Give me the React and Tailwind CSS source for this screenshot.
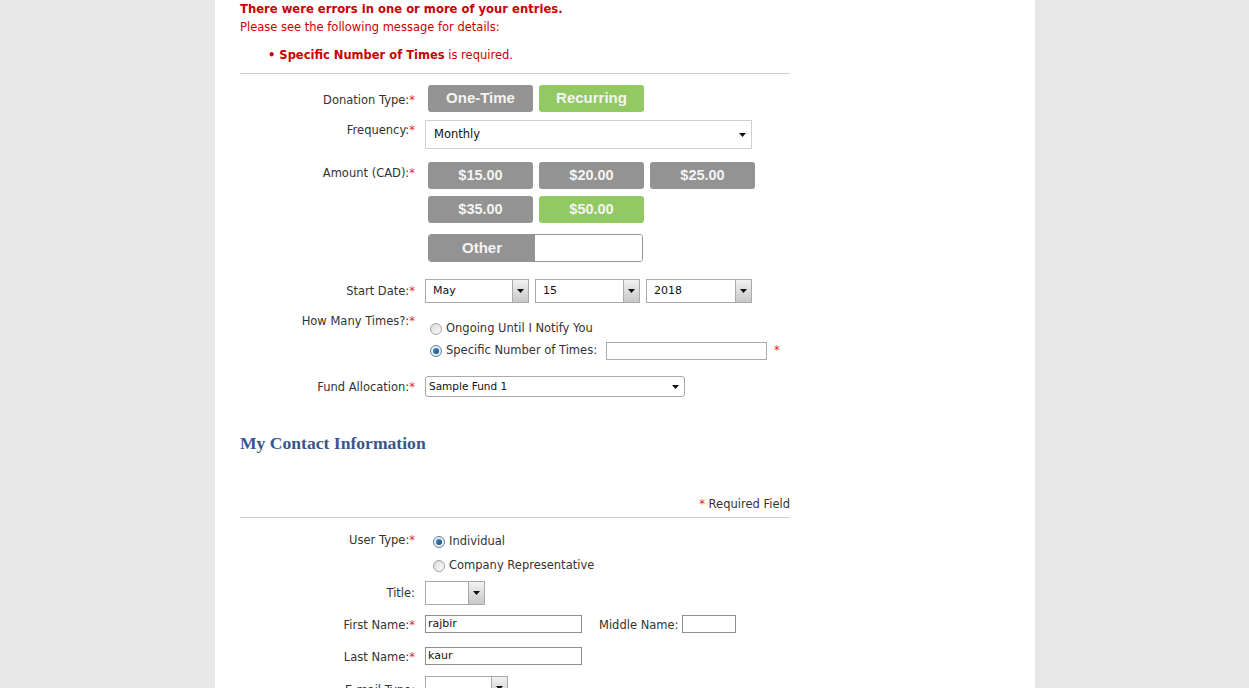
import React from "react";

const Star = () => <span className="text-[#e02b2b]">*</span>;

function Label({ children, req, pt = "pt-0" }) {
  return (
    <div className={`w-[175px] shrink-0 text-right text-[#333] leading-[14px] ${pt}`}>
      {children}
      {req && <Star />}
    </div>
  );
}

function Btn({ children, green, w = "w-[105px]", size = "text-[15px]" }) {
  return (
    <div
      className={`${w} h-[27px] rounded-[3px] flex items-center justify-center font-['Liberation_Sans',Arial,sans-serif] font-bold ${size} text-[#f4f4f4] ${
        green ? "bg-[#92c963]" : "bg-[#939393]"
      }`}
    >
      {children}
    </div>
  );
}

function Arrow() {
  return (
    <svg width="7" height="4" viewBox="0 0 7 4">
      <path d="M0 0h7L3.5 4z" fill="#111" />
    </svg>
  );
}

function BoxSelect({ w, h = "h-[24px]", value }) {
  return (
    <div className={`${w} ${h} border border-[#a9a9a9] bg-white flex items-stretch`}>
      <div className="flex-1 flex items-center pl-[7px] text-[11px] text-[#111]">{value}</div>
      <div className="w-[16px] border-l border-[#a9a9a9] bg-gradient-to-b from-[#f2f2f2] to-[#c8c8c8] flex items-center justify-center">
        <Arrow />
      </div>
    </div>
  );
}

function Radio({ checked }) {
  return checked ? (
    <div className="w-[12px] h-[12px] rounded-full border border-[#5d7f9e] bg-[#e8f0f6] flex items-center justify-center">
      <div className="w-[6px] h-[6px] rounded-full bg-gradient-to-br from-[#4d8fc4] to-[#0c4a7c]" />
    </div>
  ) : (
    <div className="w-[12px] h-[12px] rounded-full border border-[#a3a3a3] bg-gradient-to-br from-[#d8d8d8] to-[#fdfdfd]" />
  );
}

function TextInput({ w, value }) {
  return (
    <div className={`${w} h-[18px] border border-[#8f8f8f] bg-white flex items-center pl-[2px] pt-[1px] text-[11px] text-[#111]`}>
      {value}
    </div>
  );
}

export default function App() {
  return (
    <div className="min-h-[688px] bg-[#e8e8e8] font-['DejaVu_Sans',Verdana,sans-serif] text-[11.5px]">
      <div className="ml-[215px] w-[820px] h-[688px] bg-white pl-[25px] pt-[1px] overflow-hidden">
        <div className="w-[550px]">
          {/* errors */}
          <p className="text-[#cc0000] font-bold text-[11.6px] leading-[16px]">
            There were errors in one or more of your entries.
          </p>
          <p className="text-[#cc0000] leading-[16px] mt-[2px]">Please see the following message for details:</p>
          <p className="mt-[12px] leading-[16px] ml-[28px] text-[#cc0000]">
            <span className="font-bold">• Specific Number of Times</span> is required.
          </p>
          <div className="mt-[10px] border-t border-[#cfcfcf]" />

          {/* Donation type */}
          <div className="flex mt-[11px]">
            <Label req pt="pt-[8px]">Donation Type:</Label>
            <div className="ml-[13px] flex gap-[6px]">
              <Btn>One-Time</Btn>
              <Btn green>Recurring</Btn>
            </div>
          </div>

          {/* Frequency */}
          <div className="flex mt-[8px]">
            <Label req pt="pt-[3px]">Frequency:</Label>
            <div className="ml-[10px] w-[327px] h-[29px] border border-[#d0d0d0] bg-white flex items-center justify-between pl-[8px] pr-[5px] text-[11.5px] text-[#111]">
              <span>Monthly</span>
              <Arrow />
            </div>
          </div>

          {/* Amount */}
          <div className="flex mt-[13px]">
            <Label req pt="pt-[4px]">Amount (CAD):</Label>
            <div className="ml-[13px] flex flex-col">
              <div className="flex gap-[6px]">
                <Btn size="text-[14.5px]">$15.00</Btn>
                <Btn size="text-[14.5px]">$20.00</Btn>
                <Btn size="text-[14.5px]">$25.00</Btn>
              </div>
              <div className="flex gap-[6px] mt-[7px]">
                <Btn size="text-[14.5px]">$35.00</Btn>
                <Btn green size="text-[14.5px]">$50.00</Btn>
              </div>
              <div className="flex mt-[11px] w-[215px] h-[28px] rounded-[3px] border border-[#939393] overflow-hidden">
                <div className="w-[106px] bg-[#939393] flex items-center justify-center font-['Liberation_Sans',Arial,sans-serif] font-bold text-[15px] text-[#f4f4f4]">
                  Other
                </div>
                <div className="flex-1 bg-white" />
              </div>
            </div>
          </div>

          {/* Start Date */}
          <div className="flex mt-[17px]">
            <Label req pt="pt-[5px]">Start Date:</Label>
            <div className="ml-[10px] flex gap-[6px]">
              <BoxSelect w="w-[104px]" value="May" />
              <BoxSelect w="w-[105px]" value="15" />
              <BoxSelect w="w-[106px]" value="2018" />
            </div>
          </div>

          {/* How many */}
          <div className="flex mt-[8px]">
            <Label req pt="pt-[3px]">How Many Times?:</Label>
            <div className="ml-[15px] pt-[10px] text-[#333]">
              <div className="flex items-center gap-[4px] h-[16px]">
                <Radio />
                <span>Ongoing Until I Notify You</span>
              </div>
              <div className="flex items-center gap-[4px] h-[18px] mt-[5px]">
                <Radio checked />
                <span>Specific Number of Times:</span>
                <div className="ml-[5px] w-[161px] h-[18px] border border-[#a9a9a9] bg-white" />
                <span className="ml-[3px]">
                  <Star />
                </span>
              </div>
            </div>
          </div>

          {/* Fund */}
          <div className="flex mt-[16px]">
            <Label req pt="pt-[4px]">Fund Allocation:</Label>
            <div className="ml-[10px] w-[260px] h-[21px] rounded-[3px] border border-[#a9a9a9] bg-white flex items-center justify-between pl-[3px] pr-[5px] text-[10.5px] text-[#111]">
              <span>Sample Fund 1</span>
              <Arrow />
            </div>
          </div>

          <h2 className="mt-[36px] font-['Liberation_Serif',Georgia,serif] font-bold text-[17.6px] leading-[20px] text-[#3a5789]">
            My Contact Information
          </h2>

          <div className="mt-[44px] text-right text-[#333] leading-[14px]">
            <Star /> Required Field
          </div>
          <div className="mt-[6px] border-t border-[#cfcfcf]" />

          {/* User type */}
          <div className="flex mt-[14px]">
            <Label req pt="pt-[1px]">User Type:</Label>
            <div className="ml-[18px] pt-[2px] text-[#333]">
              <div className="flex items-center gap-[4px] h-[16px]">
                <Radio checked />
                <span>Individual</span>
              </div>
              <div className="flex items-center gap-[4px] h-[16px] mt-[8px]">
                <Radio />
                <span>Company Representative</span>
              </div>
            </div>
          </div>

          {/* Title */}
          <div className="flex mt-[7px]">
            <Label pt="pt-[5px]">Title:</Label>
            <div className="ml-[10px]">
              <BoxSelect w="w-[60px]" value="" />
            </div>
          </div>

          {/* First name */}
          <div className="flex mt-[10px]">
            <Label req pt="pt-[3px]">First Name:</Label>
            <div className="ml-[10px] flex items-start">
              <TextInput w="w-[157px]" value="rajbir" />
              <span className="ml-[17px] pt-[3px] leading-[14px] text-[#333]">Middle Name:</span>
              <div className="ml-[4px]">
                <TextInput w="w-[54px]" value="" />
              </div>
            </div>
          </div>

          {/* Last name */}
          <div className="flex mt-[14px]">
            <Label req pt="pt-[3px]">Last Name:</Label>
            <div className="ml-[10px]">
              <TextInput w="w-[157px]" value="kaur" />
            </div>
          </div>

          {/* Email type */}
          <div className="flex mt-[11px]">
            <Label pt="pt-[7px]">E-mail Type:</Label>
            <div className="ml-[10px]">
              <BoxSelect w="w-[83px]" value="" />
            </div>
          </div>
        </div>
      </div>
    </div>
  );
}
